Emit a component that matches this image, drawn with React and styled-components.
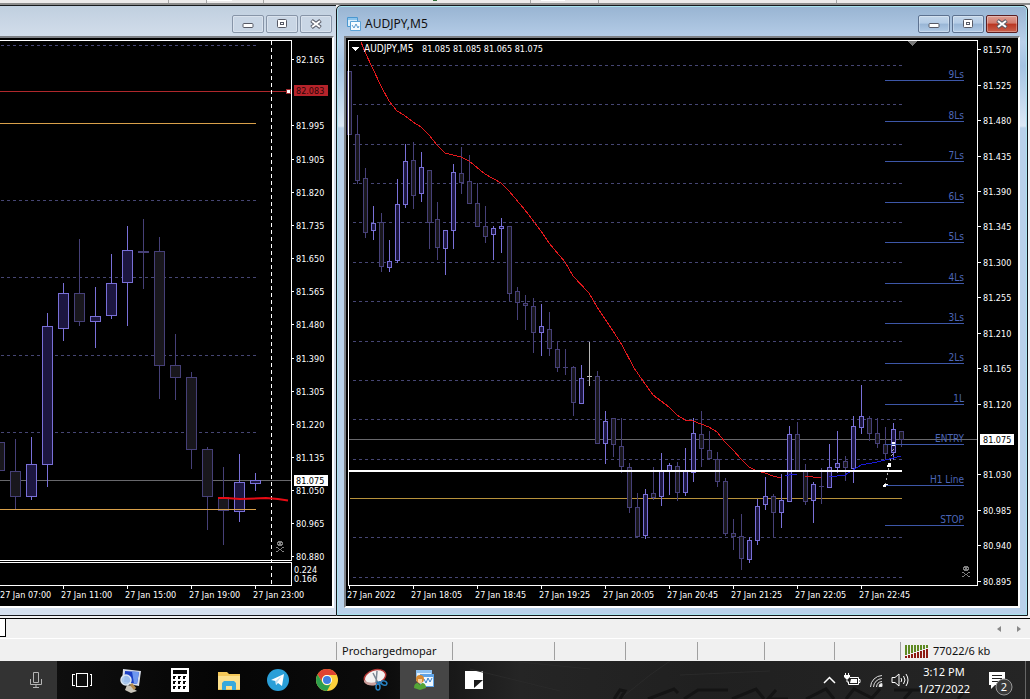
import React from "react";
import styled, { createGlobalStyle } from "styled-components";

const GlobalStyle = createGlobalStyle`
  * {
    box-sizing: border-box;
  }

  body {
    margin: 0;
    background: #f0f0f0;
    font-family: "Noto Sans", "Open Sans", sans-serif;
    font-size: 11px;
    color: #111;
  }

  button {
    font: inherit;
    color: inherit;
    padding: 0;
    border: 0;
    background: none;
  }
`;

const Screen = styled.div`
  display: flex;
  flex-direction: column;
`;

const ToolbarEdge = styled.div`
  height: 5px;
  background: #eceaea;
  border-bottom: 2px solid #8c8c8c;

  svg {
    display: block;
  }
`;

const Workspace = styled.main`
  display: grid;
  grid-template-columns: 336fr 692fr 2px;
  background: #f4f4f4;
  padding-bottom: 2px;
`;

const ChartWindow = styled.section`
  min-width: 0;
  border-style: solid;
  border-color: #15181c;
  border-width: ${({ $active }) => ($active ? "1px" : "1px 0")};
  border-radius: ${({ $active }) => ($active ? "5px 5px 0 0" : "0")};
  background: ${({ $active }) =>
    $active
      ? "linear-gradient(#98b4d2 0, #b9d0ea 36px, #a4c3e3 60px, #dbe8f6 120px, #b9d1ea 122px)"
      : "linear-gradient(#c0cfdf 0, #d5e0ed 36px, #d5e0ee)"};
  box-shadow: ${({ $active }) => ($active ? "inset 0 0 0 1px #a9e2ee" : "none")};
`;

const TitleBar = styled.header`
  display: flex;
  align-items: center;
  gap: 4px;
  height: 30px;
  padding: ${({ $active }) => ($active ? "6px 9px 0 10px" : "6px 4px 0 0")};
`;

const Title = styled.h2`
  flex: 1;
  margin: 0;
  font-size: 12px;
  font-weight: 400;
  line-height: 18px;
`;

const WindowButton = styled.button`
  display: grid;
  place-items: center;
  width: 32px;
  height: 18px;
  margin-left: ${({ $first }) => ($first ? "0" : "-2px")};
  border: 1px solid ${({ $kind }) => ($kind === "close" ? "#5c1f22" : $kind === "dim" ? "#8795a8" : "#5d7290")};
  border-radius: 2px;
  background: ${({ $kind }) =>
    $kind === "close"
      ? "linear-gradient(#dd9d92 0, #d27a6c 45%, #b93521 50%, #c9604c)"
      : $kind === "dim"
      ? "#c9d6e5"
      : "linear-gradient(#c3d6ea 0, #b4cce6 45%, #98b5d5 50%, #b2cbe6)"};
  box-shadow: inset 0 0 0 1px rgba(255, 255, 255, 0.3);
`;

const ChartFrame = styled.div`
  margin: ${({ $active }) => ($active ? "0 7px 7px" : "0 2px 7px 0")};
  border-style: solid;
  border-color: #7d8085 #fff #fff #7d8085;
  border-width: ${({ $active }) => ($active ? "2px" : "2px 2px 2px 0")};
  background: #000;
`;

const Chart = styled.svg`
  display: block;
  width: 100%;
  height: auto;
  background: #000;
  font-family: "DejaVu Sans Condensed", "DejaVu Sans", sans-serif;
  font-size: 9px;
  fill: #fff;
  shape-rendering: crispEdges;

  path[stroke] {
    fill: none;
  }
`;

const ChartTabs = styled.nav`
  display: flex;
  align-items: center;
  height: 20px;
  border-top: 1px solid #000;
  background: #f0f0f0;
`;

const CurrentTab = styled.button`
  align-self: flex-start;
  width: 6px;
  height: 18px;
  background: #fff;
  border-right: 1px solid #000;
  border-bottom: 1px solid #000;
`;

const TabArrows = styled.div`
  display: flex;
  gap: 9px;
  margin-left: auto;
  padding-right: 7px;

  button {
    display: grid;
    place-items: center;
    width: 10px;
    height: 16px;
  }
`;

const StatusBar = styled.footer`
  display: grid;
  grid-template-columns: 336fr 116fr 102fr 71fr 72fr 67fr 70fr 66fr 130fr;
  height: 23px;
  padding: 3px 0 1px;
  border-top: 1px solid #fff;
  background: #f0f0f0;
`;

const StatusCell = styled.div`
  display: flex;
  align-items: center;
  gap: 4px;
  min-width: 0;
  padding-left: ${({ $icon }) => ($icon ? "4px" : "5px")};
  padding-bottom: 1px;
  border-left: ${({ $plain }) => ($plain ? "0" : "1px solid #a0a0a0")};
  white-space: nowrap;
`;

const Taskbar = styled.nav`
  position: relative;
  display: flex;
  align-items: center;
  height: 38px;
  background: linear-gradient(90deg, #121212 0, #050505 220px, #0b0b0b 380px, #252525 520px, #202020 700px, #252525);
  color: #fff;
  overflow: hidden;
`;

const Backdrop = styled.svg`
  position: absolute;
  right: 0;
  bottom: 0;
`;

const MicButton = styled.button`
  display: grid;
  place-items: center end;
  width: 57px;
  height: 38px;
  padding-right: 14px;
  background: #333;
`;

const AppButton = styled.button`
  display: grid;
  place-items: center;
  width: 49px;
  height: 38px;
  background: ${({ $active }) => ($active ? "#464646" : "transparent")};
`;

const Tray = styled.div`
  position: relative;
  display: flex;
  align-items: center;
  gap: 8px;
  height: 38px;
  margin-left: auto;

  button {
    display: grid;
    place-items: center;
  }
`;

const Clock = styled.time`
  width: 54px;
  margin-right: 10px;
  font-size: 11px;
  line-height: 17px;
  text-align: center;
`;

const ShowDesktop = styled.button`
  width: 5px;
  height: 38px;
  border-left: 1px solid #666;
`;

// [x, high, top, bottom, low, rising]
const hourCandles = [
  [-1, 442, 442, 470, 470, 0],
  [15, 439, 471, 496, 509, 0],
  [31, 437, 464, 496, 500, 1],
  [47, 313, 326, 464, 487, 1],
  [63, 283, 293, 328, 341, 1],
  [79, 239, 293, 321, 326, 0],
  [95, 287, 316, 321, 348, 1],
  [111, 254, 283, 315, 319, 1],
  [127, 226, 250, 282, 326, 1],
  [143, 219, 251, 252, 289, 0],
  [159, 237, 251, 365, 399, 0],
  [175, 334, 365, 377, 400, 0],
  [191, 372, 377, 449, 469, 0],
  [207, 447, 449, 496, 530, 0],
  [223, 467, 497, 510, 545, 0],
  [239, 454, 482, 511, 522, 1],
  [255, 473, 480, 483, 491, 1],
];

// one entry every 8px: [high, top, bottom, low, rising]
const minuteCandles = [
  [71, 71, 134, 135, 0],
  [115, 134, 180, 184, 0],
  [168, 178, 232, 238, 0],
  [206, 223, 230, 240, 1],
  [213, 222, 266, 272, 0],
  [240, 261, 267, 272, 1],
  [179, 204, 260, 263, 1],
  [144, 161, 204, 208, 1],
  [142, 160, 195, 209, 0],
  [152, 167, 193, 202, 1],
  [170, 170, 222, 249, 0],
  [202, 219, 247, 260, 0],
  [230, 230, 248, 275, 1],
  [164, 172, 230, 249, 1],
  [147, 173, 182, 194, 0],
  [155, 181, 203, 204, 0],
  [183, 203, 226, 227, 0],
  [206, 226, 236, 243, 0],
  [226, 228, 234, 260, 1],
  [218, 226, 228, 253, 1],
  [226, 226, 293, 301, 0],
  [287, 291, 302, 320, 0],
  [295, 303, 305, 330, 0],
  [298, 306, 332, 353, 0],
  [304, 326, 332, 356, 1],
  [312, 329, 348, 356, 0],
  [341, 349, 367, 372, 0],
  [349, 367, 367, 375, 0],
  [366, 367, 402, 416, 0],
  [365, 378, 403, 404, 1],
  [342, 376, 376, 386, 2],
  [371, 376, 443, 444, 0],
  [411, 421, 443, 464, 1],
  [418, 418, 444, 457, 0],
  [418, 446, 466, 473, 0],
  [463, 467, 507, 513, 0],
  [493, 507, 536, 537, 0],
  [489, 494, 535, 539, 1],
  [467, 493, 497, 500, 0],
  [453, 471, 496, 506, 1],
  [463, 465, 470, 495, 1],
  [462, 466, 492, 501, 0],
  [448, 470, 492, 496, 1],
  [418, 433, 472, 482, 1],
  [411, 434, 448, 467, 0],
  [431, 450, 458, 459, 0],
  [452, 459, 481, 487, 0],
  [478, 481, 533, 536, 0],
  [519, 533, 536, 550, 0],
  [514, 536, 558, 570, 0],
  [537, 540, 559, 563, 1],
  [499, 506, 540, 545, 1],
  [477, 496, 504, 510, 1],
  [494, 496, 512, 538, 0],
  [474, 500, 512, 528, 1],
  [426, 434, 501, 502, 1],
  [422, 434, 470, 471, 0],
  [464, 471, 501, 505, 0],
  [482, 484, 500, 523, 1],
  [468, 486, 486, 504, 0],
  [444, 467, 487, 488, 1],
  [431, 463, 467, 473, 1],
  [456, 461, 467, 481, 0],
  [416, 426, 468, 483, 1],
  [385, 416, 427, 434, 1],
  [416, 418, 433, 441, 0],
  [418, 433, 443, 448, 0],
  [427, 444, 453, 459, 0],
  [423, 429, 452, 460, 1],
  [431, 431, 439, 447, 0],
].map((c, i) => [349 + i * 8, ...c]);

const hourPrices = [
  [59, "82.165"],
  [125, "81.995"],
  [159, "81.905"],
  [192, "81.820"],
  [225, "81.735"],
  [258, "81.650"],
  [291, "81.565"],
  [324, "81.480"],
  [358, "81.390"],
  [391, "81.305"],
  [424, "81.220"],
  [457, "81.135"],
  [490, "81.050"],
  [523, "80.965"],
  [556, "80.880"],
];

const minutePrices = [
  [49, "81.570"],
  [85, "81.525"],
  [120, "81.480"],
  [156, "81.435"],
  [191, "81.390"],
  [226, "81.345"],
  [262, "81.300"],
  [297, "81.255"],
  [333, "81.210"],
  [368, "81.165"],
  [404, "81.120"],
  [474, "81.030"],
  [510, "80.985"],
  [545, "80.940"],
  [581, "80.895"],
];

const levels = [
  [80, "9Ls"],
  [121, "8Ls"],
  [161, "7Ls"],
  [202, "6Ls"],
  [242, "5Ls"],
  [283, "4Ls"],
  [323, "3Ls"],
  [363, "2Ls"],
  [404, "1L"],
  [444, "ENTRY"],
  [485, "H1 Line"],
  [525, "STOP"],
];

const hourTimes = ["07:00", "11:00", "15:00", "19:00", "23:00"];
const minuteTimes = ["2022", "18:05", "18:45", "19:25", "20:05", "20:45", "21:25", "22:05", "22:45"];

const candleColors = [
  ["#464078", "#19171d"],
  ["#7970d8", "#1c1640"],
  ["#b8b8b8", "#000"],
];

function Candles({ data, half }) {
  return data.map(([x, high, top, bottom, low, kind]) => {
    const [line, body] = candleColors[kind];
    return (
      <g key={x} fill={body}>
        <path d={`M${x + 0.5} ${high}V${low}`} stroke={line} />
        {bottom - top < 2 ? (
          <path d={`M${x - half} ${top + 0.5}h${half * 2 + 1}`} stroke={line} strokeWidth={bottom - top + 1} />
        ) : (
          <rect x={x - half + 0.5} y={top + 0.5} width={half * 2} height={bottom - top} stroke={line} />
        )}
      </g>
    );
  });
}

function Grid({ rows, from, to }) {
  return rows.map((y) => (
    <path key={y} d={`M${from} ${y + 0.5}H${to}`} stroke="#464674" strokeDasharray="3 3" />
  ));
}

function PriceAxis({ x, prices }) {
  return prices.map(([y, label]) => (
    <g key={y}>
      <path d={`M${x} ${y + 0.5}h3`} stroke="#fff" />
      <text x={x + 5} y={y + 4}>{label}</text>
    </g>
  ));
}

function TimeAxis({ x, times }) {
  return times.map((time, i) => (
    <g key={time}>
      <path d={`M${x + i * 64 + 0.5} 585v4`} stroke="#fff" />
      <text x={Math.max(0, x + i * 64 - 2)} y="598">{`27 Jan ${time}`}</text>
    </g>
  ));
}

function Skull({ x, y }) {
  return (
    <g transform={`translate(${x} ${y})`} fill="#808080">
      <path d="M2 0h4v1H2zM1 1h6v1H1zM1 2h1v1H1zM3 2h2v1H3zM6 2h1v1H6zM1 3h6v1H1zM2 4h4v1H2z" />
      <path d="M0 6h2v1H0zM6 6h2v1H6zM2 7h1v1H2zM5 7h1v1H5zM3 8h2v1H3zM2 9h1v1H2zM5 9h1v1H5zM0 10h2v1H0zM6 10h2v1H6z" />
    </g>
  );
}

function HourChart() {
  return (
    <Chart viewBox="0 38 332 568" role="img" aria-label="Hourly price chart">
      <Grid rows={[45, 200, 277, 355, 432]} from={1} to={256} />
      <path d="M0 480.5H291" stroke="#68686c" />
      <Candles data={hourCandles} half={5} />
      <path d="M0 123.500H256" stroke="#d9a04a" />
      <path d="M0 509.500H256" stroke="#d9a04a" />
      <path d="M0 91.500H289" stroke="#b0282c" />
      <path d="M271.500 41V584" stroke="#fff" strokeDasharray="4 3" />
      <path d="M218 498l8 0 14 1 26-1 12 1 10 1.500" stroke="#e80b14" strokeWidth="2" shapeRendering="auto" />
      <path d="M0 40.500H291.500V560.500H0M0 562.500H291.500V585.500H0" stroke="#fff" />
      <rect x="286.500" y="89.500" width="4" height="4" fill="#fff" stroke="#a12c30" />
      <PriceAxis x={291} prices={hourPrices} />
      <rect x="294" y="85" width="34" height="11" fill="#b5232a" />
      <text x="296" y="94" fill="#2b0507">82.083</text>
      <rect x="294" y="475" width="34" height="11" />
      <text x="296" y="484" fill="#000">81.075</text>
      <text x="294" y="573">0.224</text>
      <text x="294" y="582">0.166</text>
      <TimeAxis x={-1} times={hourTimes} />
      <Skull x={276} y={541} />
    </Chart>
  );
}

function MinuteChart() {
  const rows = [65, 104, 144, 183, 222, 262, 301, 341, 380, 419, 459, 537, 577];
  return (
    <Chart viewBox="346 38 672 568" role="img" aria-label="AUDJPY five minute chart">
      <Grid rows={rows} from={353} to={902} />
      <path d="M349 439.500H978" stroke="#68686c" />
      <path d="M350 498.500H902" stroke="#b8923c" />
      <Candles data={minuteCandles} half={2} />
      <path
        stroke="#e4181c"
        d="M361 42L365 52 373 69 381 86 389 101 397 111 404 115 413 122 421 127 429 135 437 145 445 153 461 157 469 161 485 174 501 183 509 191 525 210 541 231 549 243 565 262 573 276 589 293 597 307 613 331 622 345 634 368 643 381 653 395 669 407 677 415 685 420 693 421 701 424 709 427 717 432 725 442 733 450 741 459 749 467 757 471 765 473 773 476 781 478M805 476L821 478"
      />
      <path stroke="#1a1ad8" d="M785 476L789 475 797 474M829 477L845 475 853 470 861 465 877 462 889 459 901 456" />
      <path d="M349 471H902" stroke="#fff" strokeWidth="2" />
      {levels.map(([y, label]) => (
        <g key={label}>
          <path d={`M885 ${y + 0.5}H964`} stroke="#3d57a8" />
          <text x="964" y={y - 2} textAnchor="end" fill="#4c66b8" fontSize="10">{label}</text>
        </g>
      ))}
      <path d="M885 485L894 446" stroke="#aaa" strokeDasharray="2 3" />
      <path d="M892 442h3v2h-3zM892 445h3v1h-3zM888 463h3v4h-4v-2h1zM884 484h4v1h-2v2h-3v-2h1z" />
      <path d="M348.500 585V40.500H977.500V585.500H348" stroke="#fff" />
      <path d="M352 47h7l-3.500 4z" />
      <path d="M908 41h9l-4.500 5z" fill="#777" />
      <text x="364" y="52" fontSize="10">AUDJPY,M5</text>
      <text x="422" y="52">81.085 81.085 81.065 81.075</text>
      <PriceAxis x={978} prices={minutePrices} />
      <rect x="980" y="434" width="34" height="11" />
      <text x="983" y="443" fill="#000">81.075</text>
      <TimeAxis x={349} times={minuteTimes} />
      <Skull x={962} y={566} />
    </Chart>
  );
}

function WindowButtons({ active }) {
  const kind = active ? "normal" : "dim";
  return (
    <>
      <WindowButton $kind={kind} $first aria-label="Minimize">
        <svg width="12" height="12">
          <rect x="1" y="5.500" width="10" height="4" rx="1" fill="#fff" stroke="#575a66" />
        </svg>
      </WindowButton>
      <WindowButton $kind={kind} aria-label="Maximize">
        <svg width="12" height="12">
          <rect x="1.500" y="1.500" width="9" height="8" rx="1" fill="#fff" stroke="#575a66" />
          <rect x="4.500" y="4.500" width="3" height="2" fill="none" stroke="#575a66" />
        </svg>
      </WindowButton>
      <WindowButton $kind={active ? "close" : "dim"} aria-label="Close">
        <svg width="14" height="12">
          <path d="M2.500 2.500l9 7m0-7l-9 7" stroke="#575a66" strokeWidth="4" />
          <path d="M3 3l8 6m0-6l-8 6" stroke="#fff" strokeWidth="2" />
        </svg>
      </WindowButton>
    </>
  );
}

const ChartIcon = () => (
  <svg width="14" height="14">
    <path d="M.5.500h10v9H.5z" fill="#d7ecfb" stroke="#4a97d0" />
    <path d="M1 1h9v2H1z" fill="#8cc4ec" />
    <path d="M3.500 4.500h10v9h-10z" fill="#f5fbff" stroke="#5aa2d6" />
    <path d="M5 8l2 3 2-4 2 4 1-2" fill="none" stroke="#5a9ace" />
  </svg>
);

const TrafficIcon = () => (
  <svg width="24" height="14" shapeRendering="crispEdges">
    {[0, 1, 2, 3, 4, 5, 6, 7].map((i) => (
      <g key={i}>
        <rect x={i * 3} y="1" width="2" height={10 - i} fill="#5e8a22" />
        <rect x={i * 3} y={12 - i} width="2" height={i + 2} fill="#8e1b12" />
      </g>
    ))}
  </svg>
);

const TaskViewIcon = () => (
  <svg width="22" height="18" fill="none" stroke="#fff" shapeRendering="crispEdges">
    <path d="M5.500 2.500h11v13h-11zM3.500 3.500h-2v11h2M18.500 3.500h2v11h-2" />
  </svg>
);

const RemoteIcon = () => (
  <svg width="24" height="25">
    <path d="M4 1l18 2-2 15-17-3z" fill="#d8dde8" />
    <path d="M6 3l14 1-2 12-13-2z" fill="#1b3fc4" />
    <path d="M13 3.500l7 .5-2 12-3-.500z" fill="#6e97ef" />
    <path d="M8 17l6 1 1 3 3 2-6 2-6-3z" fill="#c9c5bb" />
    <path d="M12 16l4 5" stroke="#b68b4d" strokeWidth="3" />
    <circle cx="7" cy="12" r="5" fill="#a9c9ee" fillOpacity=".9" stroke="#dce6f2" strokeWidth="1.500" />
  </svg>
);

const CalculatorIcon = () => (
  <svg width="18" height="24" shapeRendering="crispEdges">
    <path d="M0 0h18v24H0z" fill="#fff" />
    <path d="M2 2h14v4H2z" fill="#070707" />
    {[0, 1, 2, 3, 4, 5, 6, 7, 8].map((i) => (
      <path key={i} d={`M${2 + (i % 3) * 5} ${8 + Math.floor(i / 3) * 5}h3v1h-1v2h-2z`} fill="#070707" />
    ))}
  </svg>
);

const FolderIcon = () => (
  <svg width="22" height="19">
    <path d="M0 1h9l2 2h11v16H0z" fill="#f3c758" />
    <path d="M0 5h22v13H0z" fill="#fbdf8c" />
    <path d="M4 19v-7l2-2h10l2 2v7h-4v-4H8v4z" fill="#38a9dc" />
  </svg>
);

const TelegramIcon = () => (
  <svg width="22" height="22">
    <circle cx="11" cy="11" r="11" fill="#2a9fd8" />
    <path d="M4 11l13-6-2 12-4-3-2 2-.500-4z" fill="#fff" />
    <path d="M8.500 12l6-5-4 6-1.500 3z" fill="#c4e0f1" />
  </svg>
);

const ChromeIcon = () => (
  <svg width="22" height="22" viewBox="-11 -11 22 22">
    <circle r="11" fill="#fdd03b" />
    <path d="M0-5H9.800A11 11 0 0 0-9.500-5.500L-4.500 2.500A5 5 0 0 1 0-5" fill="#df4332" />
    <path d="M-9.500-5.500A11 11 0 0 0 0 11L4.500 2.500A5 5 0 0 1-4.500 2.500" fill="#2d9f4d" />
    <circle r="5" fill="#fff" />
    <circle r="4" fill="#3f7ee0" />
  </svg>
);

const SnippingIcon = () => (
  <svg width="26" height="24">
    <ellipse cx="12" cy="9" rx="11" ry="7" transform="rotate(-18 12 9)" fill="#f4f2f2" stroke="#b53a38" strokeWidth="1.500" />
    <path d="M1 12q4 4 12 2v3q-8 2-12-3z" fill="#c9a09d" />
    <path d="M10 5l6 12M14 3l-1 12" stroke="#7b8794" strokeWidth="1.500" />
    <path d="M13 14l4-1 2 3-4 1z" fill="#2777b4" />
    <ellipse cx="15" cy="19" rx="2" ry="3" fill="none" stroke="#2780c0" strokeWidth="1.500" />
    <ellipse cx="21" cy="15" rx="3" ry="2" transform="rotate(25 21 15)" fill="none" stroke="#2780c0" strokeWidth="1.500" />
  </svg>
);

const TraderIcon = () => (
  <svg width="22" height="22">
    <path d="M2 1h16v11H2z" fill="#8dc1f1" />
    <path d="M3 4h14v8H3z" fill="#e2f1fd" />
    <path d="M6 5h14v13H6z" fill="#5fa3e6" />
    <path d="M7 8h12v9H7z" fill="#f0f8ff" />
    <path d="M10 10l2 4 2-5 2 4 2-4" fill="none" stroke="#3b82ca" />
    <circle cx="6" cy="10" r="4" fill="#d88a31" />
    <path d="M4 10h4v3l-2 2-2-2z" fill="#f8ce9c" />
    <path d="M0 19q0-5 4-5l2 2 2-2q4 0 4 5l-6 2z" fill="#54a537" />
  </svg>
);

const NotesIcon = () => (
  <svg width="18" height="18">
    <path d="M0 0h18v18H0z" fill="#fff" />
    <path d="M9 9h9l-9 8z" fill="#1a1a1a" />
  </svg>
);

const apps = [
  ["Task View", TaskViewIcon],
  ["Remote Desktop", RemoteIcon],
  ["Calculator", CalculatorIcon],
  ["File Explorer", FolderIcon],
  ["Telegram", TelegramIcon],
  ["Chrome", ChromeIcon],
  ["Snipping Tool", SnippingIcon],
  ["MetaTrader", TraderIcon, true],
  ["Sticky Notes", NotesIcon],
];

function SystemTray() {
  return (
    <Tray>
      <button aria-label="Show hidden icons">
        <svg width="13" height="8" fill="none" stroke="#fff" strokeWidth="1.500">
          <path d="M1 7l5.500-5.500L12 7" />
        </svg>
      </button>
      <button aria-label="Battery">
        <svg width="17" height="14" fill="none" stroke="#fff">
          <path d="M6 4.500h8.500v7H4.500V9M15 6.500h1v3h-1" />
          <path d="M7 6h6v4H6z" fill="#fff" stroke="none" />
          <path d="M1.500 0v3M4.500 0v3M3 6v3h2" />
          <path d="M0 2h6v2L4 6H2L0 4z" fill="#fff" stroke="none" />
        </svg>
      </button>
      <button aria-label="Network">
        <svg width="14" height="15" fill="none" stroke="#ddd">
          <path d="M1.500 14A12 12 0 0 1 13 2.500M4.500 14A9 9 0 0 1 13 5.500M7.500 14A6 6 0 0 1 13 8.500" />
          <path d="M10 13.500a3 3 0 0 1 3-3v3z" fill="#fff" />
        </svg>
      </button>
      <button aria-label="Volume">
        <svg width="18" height="14" fill="none" stroke="#fff">
          <path d="M1 4.500h3L8 1v12L4 9.500H1zM10 5q1.500 2 0 4M12.500 3q3 4 0 8M15 1q4 6 0 12" />
        </svg>
      </button>
      <Clock dateTime="2022-01-27T15:12">
        3:12 PM
        <br />
        1/27/2022
      </Clock>
      <button aria-label="Notifications, 2 new">
        <svg width="28" height="32">
          <path d="M0 8h16v13H6l-4 4v-4H0z" fill="#fff" />
          <path d="M3 11.500h10M3 14.500h10M3 17.500h6" stroke="#222" />
          <circle cx="15" cy="23" r="8" fill="#3a3a3a" stroke="#999" />
          <text x="15" y="27" textAnchor="middle" fontSize="11" fill="#fff">2</text>
        </svg>
      </button>
      <ShowDesktop aria-label="Show desktop" />
    </Tray>
  );
}

export default function App() {
  return (
    <Screen>
      <GlobalStyle />
      <ToolbarEdge>
        <svg width="100%" height="3" shapeRendering="crispEdges">
          <path d="M168.500 0v3M206.500 0v3M263.500 0v3M530.500 0v3M598.500 0v3M836.500 0v3" stroke="#a5a5a5" />
          <path d="M207 0h25v1h-25zM541 0h24v1h-24z" fill="#fff" />
          <path d="M433 0h4v1h-4z" fill="#2e6b35" />
        </svg>
      </ToolbarEdge>
      <Workspace>
        <ChartWindow>
          <TitleBar>
            <Title aria-label="Hourly chart" />
            <WindowButtons />
          </TitleBar>
          <ChartFrame>
            <HourChart />
          </ChartFrame>
        </ChartWindow>
        <ChartWindow $active>
          <TitleBar $active>
            <ChartIcon />
            <Title>AUDJPY,M5</Title>
            <WindowButtons active />
          </TitleBar>
          <ChartFrame $active>
            <MinuteChart />
          </ChartFrame>
        </ChartWindow>
      </Workspace>
      <ChartTabs aria-label="Charts">
        <CurrentTab aria-label="Current chart" />
        <TabArrows>
          <button aria-label="Previous charts">
            <svg width="5" height="8" fill="#888">
              <path d="M4 1v6L0 4z" />
            </svg>
          </button>
          <button aria-label="Next charts">
            <svg width="5" height="8" fill="#888">
              <path d="M1 1v6l4-3z" />
            </svg>
          </button>
        </TabArrows>
      </ChartTabs>
      <StatusBar>
        <StatusCell $plain />
        <StatusCell>Prochargedmopar</StatusCell>
        <StatusCell />
        <StatusCell />
        <StatusCell />
        <StatusCell />
        <StatusCell />
        <StatusCell />
        <StatusCell $icon>
          <TrafficIcon />
          77022/6 kb
        </StatusCell>
      </StatusBar>
      <Taskbar aria-label="Taskbar">
        <Backdrop width="560" height="38" aria-hidden="true">
          <path d="M0 8l90 22M40 0l80 8M150 38l30-24 20-14M210 14l90-4" stroke="#2a2a2a" fill="none" />
          <path d="M144 38l6-9 5 1-5 8M178 38l26-10 4 4M214 38l14-9h30M262 38l24-10 8 10M306 29l-8 9h20M336 38l20-10 8 10M376 38l8-10 18 9 8-9M424 29h26M434 38l8-9M462 30h22M494 30l-6 8" stroke="#141414" strokeWidth="3" fill="none" />
        </Backdrop>
        <MicButton aria-label="Voice search">
          <svg width="14" height="18" fill="none" stroke="#b5b5b5">
            <path d="M4.500 1.500h5v10h-5zM1.500 8v5.500h11V8M7 13.500V17M4 16.500h6" />
          </svg>
        </MicButton>
        {apps.map(([name, Icon, active]) => (
          <AppButton key={name} $active={active} aria-label={name}>
            <Icon />
          </AppButton>
        ))}
        <SystemTray />
      </Taskbar>
    </Screen>
  );
}
